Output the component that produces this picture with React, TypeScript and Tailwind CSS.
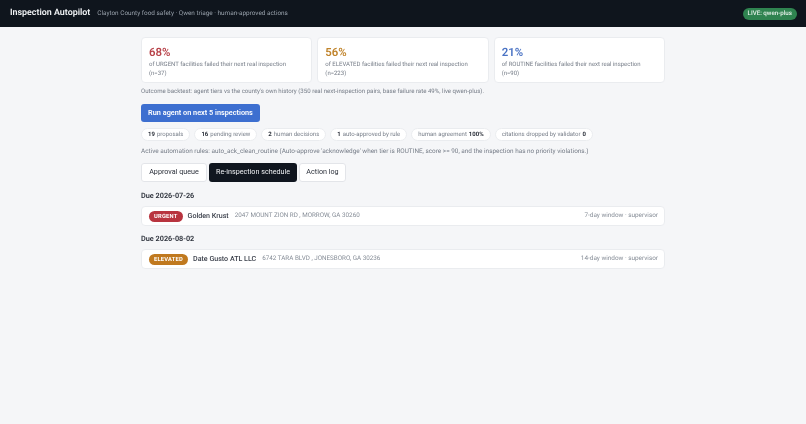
const stats = [
  { pct: "68%", tier: "URGENT", n: 37, color: "text-[#b8434a]" },
  { pct: "56%", tier: "ELEVATED", n: 223, color: "text-[#c0842c]" },
  { pct: "21%", tier: "ROUTINE", n: 90, color: "text-[#4a73c4]" },
];

const pills: Array<[string, string, boolean]> = [
  ["19", "proposals", true],
  ["16", "pending review", true],
  ["2", "human decisions", true],
  ["1", "auto-approved by rule", true],
  ["100%", "human agreement", false],
  ["0", "citations dropped by validator", false],
];

const schedule = [
  {
    due: "2026-07-26",
    tier: "URGENT",
    badge: "bg-[#b8343f]",
    name: "Golden Krust",
    address: "2047 MOUNT ZION RD , MORROW, GA 30260",
    window: "7-day window · supervisor",
  },
  {
    due: "2026-08-02",
    tier: "ELEVATED",
    badge: "bg-[#c0791f]",
    name: "Date Gusto ATL LLC",
    address: "6742 TARA BLVD , JONESBORO, GA 30236",
    window: "14-day window · supervisor",
  },
];

export default function App() {
  return (
    <div className="min-h-[424px] bg-[#f5f6f8] font-['Roboto','Noto_Sans',sans-serif] text-[#1f2430] [text-rendering:geometricPrecision]">
      <header className="bg-[#0f151d]">
        <div className="flex h-[27px] items-center justify-between pl-[10px] pr-[9px] will-change-transform">
          <div className="flex items-baseline gap-[7px]">
            <span className="text-[8.9px] font-semibold text-[#f3f5f7]">Inspection Autopilot</span>
            <span className="text-[6.4px] text-[#98a1ab]">Clayton County food safety · Qwen triage · human-approved actions</span>
          </div>
          <span className="flex h-[12px] items-center rounded-full bg-[#2f8350] px-[5px] text-[6.2px] font-medium text-[#e8f3ec]">LIVE: qwen-plus</span>
        </div>
      </header>

      <main className="mx-auto w-[524px] pt-[10px] will-change-transform">
        <div className="grid grid-cols-3 gap-[5px]">
          {stats.map((s) => (
            <div key={s.tier} className="h-[46px] rounded-[4px] border border-[#eaecef] bg-white pl-[7px] pt-[7px]">
              <div className={`text-[11.4px] leading-[14px] font-semibold ${s.color}`}>{s.pct}</div>
              <div className="mt-[1px] text-[6px] leading-[9px] text-[#757c87]">
                of {s.tier} facilities failed their next real inspection
                <br />
                (n={s.n})
              </div>
            </div>
          ))}
        </div>

        <p className="mt-[4px] text-[6.1px] leading-[9px] text-[#757c87]">
          Outcome backtest: agent tiers vs the county's own history (350 real next-inspection pairs, base failure rate 49%, live qwen-plus).
        </p>

        <button className="mt-[8px] flex h-[18px] w-[119px] items-center justify-center rounded-[3px] bg-[#3d6fd0] text-[7.3px] font-semibold text-white">
          Run agent on next 5 inspections
        </button>

        <div className="mt-[6px] flex gap-[4px]">
          {pills.map(([value, label, first]) => (
            <span key={label} className="flex h-[13px] items-center gap-[2px] rounded-full border border-[#eaecef] bg-white px-[6px] text-[6px] text-[#757c87]">
              {first && <b className="font-bold text-[#2b303a]">{value}</b>}
              {label}
              {!first && <b className="font-bold text-[#2b303a]">{value}</b>}
            </span>
          ))}
        </div>

        <p className="mt-[6px] text-[6.4px] leading-[9px] text-[#757c87]">
          Active automation rules: auto_ack_clean_routine (Auto-approve 'acknowledge' when tier is ROUTINE, score &gt;= 90, and the inspection has no priority violations.)
        </p>

        <div className="mt-[7px] flex gap-[2px] text-[7.2px]">
          <button className="h-[19px] w-[66px] rounded-[3px] border border-[#e3e5e9] bg-white text-[#2b303a]">Approval queue</button>
          <button className="h-[19px] w-[88px] rounded-[3px] bg-[#10161f] text-[#eef0f3]">Re-inspection schedule</button>
          <button className="h-[19px] w-[47px] rounded-[3px] border border-[#e3e5e9] bg-white text-[#2b303a]">Action log</button>
        </div>

        <div className="mt-[9px] flex flex-col gap-[8px]">
          {schedule.map((s) => (
            <section key={s.due}>
              <h3 className="text-[7.3px] leading-[10px] font-semibold text-[#2b303a]">Due {s.due}</h3>
              <div className="mt-[5px] flex h-[20px] items-center justify-between rounded-[4px] border border-[#eaecef] bg-white pl-[7px] pr-[6px]">
                <div className="flex items-center gap-[5px]">
                  <span className={`flex h-[11px] items-center rounded-full px-[5px] pt-[1px] text-[5.8px] leading-[8px] font-bold tracking-[0.2px] text-white ${s.badge}`}>{s.tier}</span>
                  <span className="text-[7.1px] font-medium text-[#3a3f4a]">{s.name}</span>
                  <span className="ml-[1px] text-[6.3px] text-[#868d97]">{s.address}</span>
                </div>
                <span className="text-[6.4px] text-[#868d97]">{s.window}</span>
              </div>
            </section>
          ))}
        </div>
      </main>
    </div>
  );
}
